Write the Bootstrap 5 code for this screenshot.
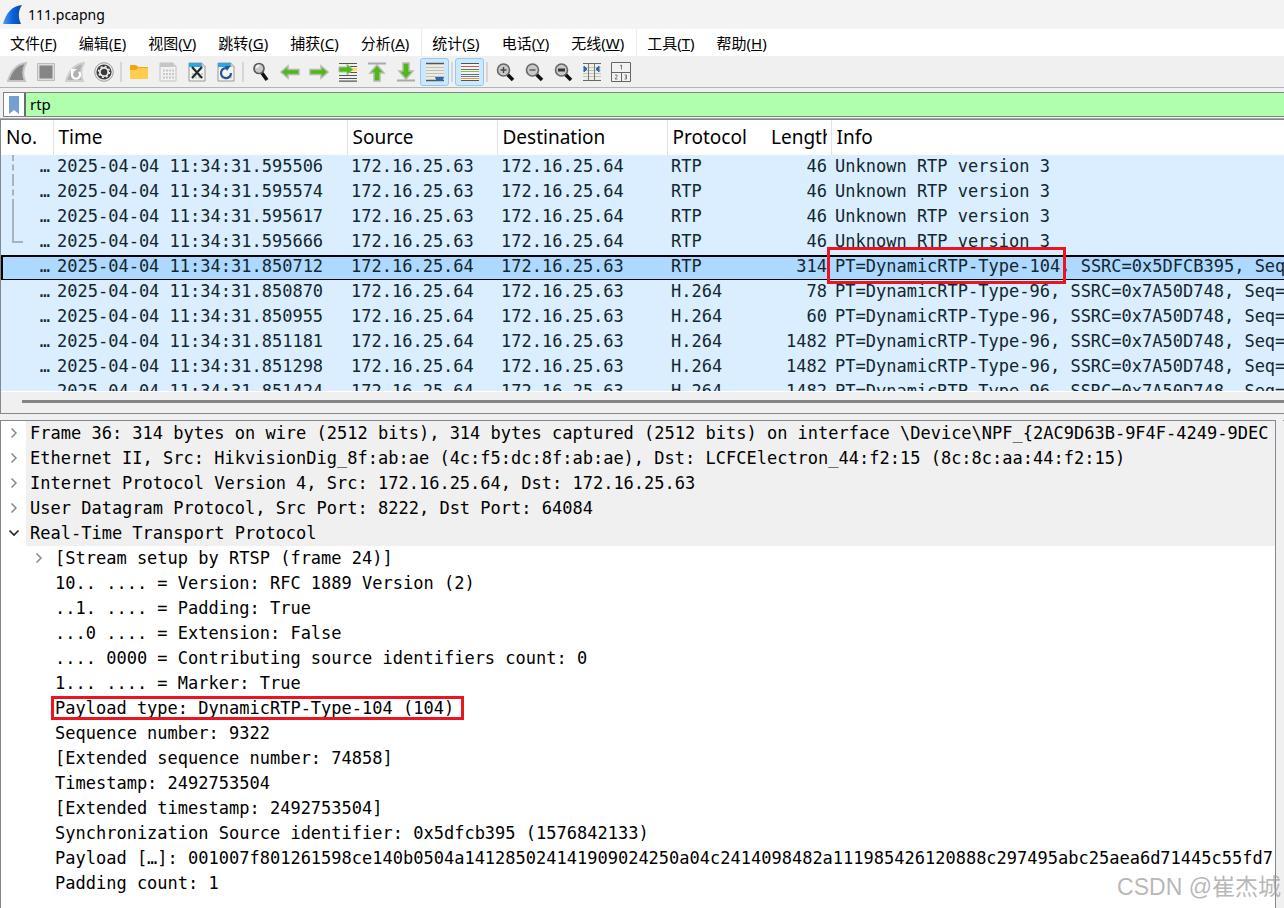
<!DOCTYPE html>
<html lang="zh-CN">
<head>
<meta charset="utf-8">
<meta name="viewport" content="width=device-width, initial-scale=1">
<title>111.pcapng</title>
<link href="https://cdn.jsdelivr.net/npm/bootstrap@5.3.0/dist/css/bootstrap.min.css" rel="stylesheet">
<style>
  body { background: #f0f0f0; color: #000; font-family: "Noto Sans", "Noto Sans CJK SC", sans-serif; font-size: 14px; }
  .mono { font-family: "DejaVu Sans Mono", monospace; font-size: 17px; }
  .titlebar { height: 29px; background: #f3f3f3; padding-left: 3px; gap: 5px; }
  .menubar { height: 27px; background: #fff; font-size: 15px; }
  .menubar button { border: 0; background: none; color: #000; padding: 0 12px 0 10px; white-space: nowrap; line-height: 26px; }
  .menubar .edge { border-left: 1px solid #ececec; }
  .tools { height: 32px; border-bottom: 1px solid #b4b4b4; padding: 2px 2px 1px; }
  .tools button { width: 29px; height: 28px; border: 1px solid transparent; border-radius: 3px; background: none; padding: 0; display: flex; align-items: center; justify-content: center; }
  .tools button.on { background: #cce8ff; border-color: #90c8f6; }
  .tools svg { width: 20px; height: 20px; }
  .divide { width: 2px; height: 20px; margin: 0 2px; background: #d6d6d6; }
  .filterbar { height: 25px; margin: 4px 0 1px 3px; border: 1px solid #828282; border-right: 0; background: #fff; }
  .filterbar button { width: 20px; border: 0; background: #fff; padding: 0; display: flex; align-items: center; justify-content: center; }
  .filterbar input { border: 0; border-left: 2px solid #6b6b6b; background: #afffaf; padding: 0 0 1px 4px; outline: 0; font-size: 15px; color: #000; }
  .panes { border-top: 1px solid #a8a8a8; gap: 6px; }
  .packets { flex: 293 1 0; border: 1px solid #828790; border-right: 0; }
  .lower { flex: 489 1 0; gap: 7px; }
  .packets table { table-layout: fixed; --bs-table-bg: #daeeff; --bs-table-color: #12272e; color: #12272e; }
  .packets th { --bs-table-bg: #fff; height: 35px; padding: 0 4px 0 5px; font-size: 19px; font-weight: 400; line-height: 35px; color: #000; border-right: 1px solid #e2e2e2; }
  .packets th.plain { border-right: 0; }
  .packets td { height: 25px; padding: 0 4px; line-height: 23px; white-space: nowrap; vertical-align: top; }
  .packets td:first-child { padding-right: 3px; }
  .packets .c-no { width: 52px; } .packets .c-time { width: 294px; } .packets .c-src { width: 150px; }
  .packets .c-dst { width: 170px; } .packets .c-proto { width: 99px; } .packets .c-len { width: 65px; }
  .packets tr.picked td { --bs-table-bg: #add8ff; background: #add8ff; box-shadow: inset 0 2px #000, inset 0 -1px #000; }
  .packets tr.picked td:first-child { box-shadow: inset 0 2px #000, inset 0 -1px #000, inset 2px 0 #000; }
  .link-mark { width: 11px; height: 25px; margin-left: 7px; border-left: 2px solid #a4b3bd; }
  .link-mark.dash { border-left-style: dashed; }
  .link-mark.end { height: 13px; border-bottom: 2px solid #a4b3bd; }
  .hscroll { height: 22px; padding-left: 21px; padding-bottom: 2px; background: #f0f0f0; border-top: 1px solid #fff; }
  .hscroll div { height: 3px; background: #858585; }
  .flag { position: relative; }
  .flag::after { content: ""; position: absolute; border: 3px solid #ed1420; inset: -9px -6px -8px -8px; }
  .flag.tight::after { inset: -2px -10px -2px -4px; }
  .details { border: 1px solid #828790; border-bottom: 0; background: #fff; }
  .details li { white-space: nowrap; line-height: 25px; }
  .node { display: flex; height: 25px; }
  .node button { width: 25px; flex: none; border: 0; background: none; padding: 0; display: flex; align-items: center; justify-content: center; }
  .node .lbl { flex: 1 0 auto; padding-left: 4px; }
  .layer > .node .lbl { background: #f0f0f0; }
  .sub { padding-left: 25px; }
  .sub .leaf { padding-left: 29px; }
  .bytes { flex: none; width: 1px; border-top: 1px solid #828790; background: #f0f0f0; }
  .credit { position: absolute; right: 3px; bottom: 4px; font-size: 23px; line-height: 34px; color: rgba(160,160,160,.75); font-family: "Liberation Sans", "Noto Sans CJK SC", sans-serif; }
</style>
</head>
<body class="vh-100 d-flex flex-column overflow-hidden">
<header>
  <div class="titlebar d-flex align-items-center">
    <svg width="20" height="20" viewBox="0 0 20 20"><defs><linearGradient id="fin" x1="0" x2="1"><stop offset="0" stop-color="#4f9cf0"/><stop offset=".5" stop-color="#0c62d8"/><stop offset="1" stop-color="#0746ac"/></linearGradient></defs><path d="M0 19C3 9 8 1 19 0C15 6 15 12 18 19Z" fill="url(#fin)"/></svg>
    <span>111.pcapng</span>
  </div>
  <nav class="menubar d-flex">
    <button type="button">文件(<u>F</u>)</button><button type="button">编辑(<u>E</u>)</button><button type="button">视图(<u>V</u>)</button><button type="button">跳转(<u>G</u>)</button><button type="button">捕获(<u>C</u>)</button><button type="button">分析(<u>A</u>)</button><button type="button" class="edge">统计(<u>S</u>)</button><button type="button">电话(<u>Y</u>)</button><button type="button">无线(<u>W</u>)</button><button type="button" class="edge">工具(<u>T</u>)</button><button type="button">帮助(<u>H</u>)</button>
  </nav>
  <div class="tools d-flex align-items-center" role="toolbar">
    <button type="button" aria-label="Start"><svg viewBox="0 0 20 20"><path d="M1 19C4 9 9 2 19 1C15.500 7 15.500 13 18 19Z" fill="#858585" stroke="#c4c4c4" stroke-width="2"/></svg></button>
    <button type="button" aria-label="Stop"><svg viewBox="0 0 20 20"><path d="M1.500 1.500h17v17h-17z" fill="#ddd" stroke="#bdbdbd"/><path d="M3.500 3.500h13v13h-13z" fill="#858585"/></svg></button>
    <button type="button" aria-label="Restart"><svg viewBox="0 0 20 20"><path d="M1 19C4 9 9 2 19 1C15.500 7 15.500 13 18 19Z" fill="#b0b0b0" stroke="#d0d0d0" stroke-width="2"/><path d="M8 10A4 4 0 1 0 14 10" fill="none" stroke="#fff" stroke-width="2.400"/><path d="M6 12V7h6z" fill="#fff"/></svg></button>
    <button type="button" aria-label="Options"><svg viewBox="0 0 20 20"><circle cx="10" cy="10" r="9.300" fill="#eee" stroke="#999"/><circle cx="10" cy="10" r="7.600" fill="#3b3b3b"/><circle cx="10" cy="10" r="4.200" fill="#3b3b3b" stroke="#eee" stroke-width="1.700"/><circle cx="10" cy="10" r="5.500" fill="none" stroke="#eee" stroke-width="1.400" stroke-dasharray="2 2.320"/></svg></button>
    <span class="divide"></span>
    <button type="button" aria-label="Open"><svg viewBox="0 0 20 20"><path d="M1 4q0-1 1-1h5l2 2h9q1 0 1 1v4H1z" fill="#eda914"/><path d="M1 8h6l2-2h9q1 0 1 1v9q0 1-1 1H2q-1 0-1-1z" fill="#ffce51"/></svg></button>
    <button type="button" aria-label="Save"><svg viewBox="0 0 20 20"><path d="M2 1h13l3 3v15H2z" fill="#f1f1f1" stroke="#c2c2c2"/><path d="M2 1h13v4H2z" fill="#c6c6c6"/><path d="M15 1v3h3" fill="#eee" stroke="#bbb"/><path d="M5 8.500h11M5 12h11M5 15.500h11" stroke="#c8c8c8" stroke-width="2" stroke-dasharray="2 1"/></svg></button>
    <button type="button" aria-label="Close"><svg viewBox="0 0 20 20"><path d="M2 1h13l3 3v15H2z" fill="#f5f5ef" stroke="#999"/><path d="M2 1h13v4H2z" fill="#2ea6df"/><path d="M15 1v3h3" fill="#eee" stroke="#aaa"/><path d="M5 12h11M5 15.500h11" stroke="#c8ccc8" stroke-width="2" stroke-dasharray="2 1"/><path d="M5 5l10 11M15 5L5 16" stroke="#25292d" stroke-width="2.200"/></svg></button>
    <button type="button" aria-label="Reload"><svg viewBox="0 0 20 20"><path d="M2 1h13l3 3v15H2z" fill="#f5f5ef" stroke="#999"/><path d="M2 1h13v4H2z" fill="#2ea6df"/><path d="M15 1v3h3" fill="#eee" stroke="#aaa"/><path d="M5 15.500h11" stroke="#c8ccc8" stroke-width="2" stroke-dasharray="2 1"/><path d="M12 6.500A5 5 0 1 0 15 11" fill="none" stroke="#24549f" stroke-width="2.200"/><path d="M9 4h5.500L11 9z" fill="#24549f"/></svg></button>
    <span class="divide"></span>
    <button type="button" aria-label="Find"><svg viewBox="0 0 20 20"><path d="M11 11l5 7" stroke="#111" stroke-width="3.500"/><circle cx="8" cy="6.500" r="5" fill="#c9c9c9" stroke="#5c5c5c" stroke-width="1.700"/><path d="M5.500 6a3 3 0 0 1 3-2.500" fill="none" stroke="#fff" stroke-width="1.300"/></svg></button>
    <button type="button" aria-label="Back"><svg viewBox="0 0 20 20"><path d="M1 10L8 4v3.500h11v5H8V16z" fill="#4fb813" stroke="#b3b9ae" stroke-width="1.500"/></svg></button>
    <button type="button" aria-label="Forward"><svg viewBox="0 0 20 20"><path d="M19 10L12 4v3.500H1v5h11V16z" fill="#4fb813" stroke="#b3b9ae" stroke-width="1.500"/></svg></button>
    <button type="button" aria-label="Go to packet"><svg viewBox="0 0 20 20"><path d="M1 1.500h18M1 13.500h18M1 16.500h18M1 19.200h18M12 4.500h7M12 10.500h7" stroke="#555" stroke-width="1.200"/><path d="M13 7.500h6" stroke="#ffe34a" stroke-width="3"/><path d="M15 7.500L9 2v3H1v5h8v3z" fill="#4fb813" stroke="#b3b9ae"/></svg></button>
    <button type="button" aria-label="First"><svg viewBox="0 0 20 20"><path d="M1 1.500h18" stroke="#aaa" stroke-width="2"/><path d="M10 3l7 8h-4v8H7v-8H3z" fill="#4fb813" stroke="#b3b9ae" stroke-width="1.500"/></svg></button>
    <button type="button" aria-label="Last"><svg viewBox="0 0 20 20"><path d="M1 18.500h18" stroke="#aaa" stroke-width="2"/><path d="M10 17l7-8h-4V1H7v8H3z" fill="#4fb813" stroke="#b3b9ae" stroke-width="1.500"/></svg></button>
    <button type="button" class="on" aria-label="Auto scroll"><svg viewBox="0 0 20 20"><path d="M1 2h18v16H1z" fill="#ecebe4"/><path d="M1 1.500h18M1 18.500h18" stroke="#555" stroke-width="1.500"/><path d="M1 5.500h18M1 8.500h18M1 11.500h18M1 14.500h18" stroke="#bfc0b6"/><path d="M10 15h9q-1 4-3 4h-3q-2 0-3-4z" fill="#2d66b3"/></svg></button>
    <span class="divide"></span>
    <button type="button" class="on" aria-label="Colorize"><svg viewBox="0 0 20 20"><path d="M1 1h18v18H1z" fill="#f6f4ee"/><path d="M1 1.500h18M1 18.500h18" stroke="#555"/><path d="M1 4.500h18" stroke="#e74c45"/><path d="M1 7.500h18" stroke="#4d76b8"/><path d="M1 9.500h18" stroke="#74d21c"/><path d="M1 12.500h18" stroke="#466fb0"/><path d="M1 14.500h18" stroke="#8668a0"/><path d="M1 16.500h18" stroke="#d5a91c"/></svg></button>
    <span class="divide"></span>
    <button type="button" aria-label="Zoom in"><svg viewBox="0 0 20 20"><path d="M12 12l6 6" stroke="#111" stroke-width="3.500"/><circle cx="8.500" cy="8" r="6" fill="#c9c9c9" stroke="#666" stroke-width="1.600"/><path d="M5.500 8h6M8.500 5v6" stroke="#444" stroke-width="1.400"/></svg></button>
    <button type="button" aria-label="Zoom out"><svg viewBox="0 0 20 20"><path d="M12 12l6 6" stroke="#111" stroke-width="3.500"/><circle cx="8.500" cy="8" r="6" fill="#c9c9c9" stroke="#666" stroke-width="1.600"/><path d="M5.500 8h6" stroke="#555" stroke-width="1.400"/></svg></button>
    <button type="button" aria-label="Normal size"><svg viewBox="0 0 20 20"><path d="M12 12l6 6" stroke="#111" stroke-width="3.500"/><circle cx="8.500" cy="8" r="6" fill="#c9c9c9" stroke="#666" stroke-width="1.600"/><path d="M5 8h7" stroke="#333" stroke-width="3"/></svg></button>
    <button type="button" aria-label="Resize columns"><svg viewBox="0 0 20 20"><path d="M1 1h18v18H1z" fill="#eeeee6"/><path d="M1 5.500h18M1 8.500h18M1 11.500h18M1 14.500h18" stroke="#c4c6bb"/><path d="M1 1.500h18M1 18.500h18" stroke="#666"/><path d="M6.500 1v18M12.500 1v18" stroke="#777"/><path d="M2 4l3 3-3 3zM17 4l-3 3 3 3z" fill="#2d66b3" stroke="#2d66b3"/></svg></button>
    <button type="button" aria-label="Layout"><svg viewBox="0 0 20 20"><path d="M.500.500h19v19H.500zM.500 10.500h19M10.500 10v9" fill="#f2f2f2" stroke="#666"/><path d="M9 4l1.500-1v4.500M4 13h2v1.500L4 17h2.500M13.500 13h2v4h-2M14 15h1.500" fill="none" stroke="#777"/></svg></button>
  </div>
  <div class="filterbar d-flex">
    <button type="button" aria-label="Bookmark"><svg width="12" height="18" viewBox="0 0 12 18"><path d="M1 0h10v18l-5-4-5 4z" fill="#739fd2"/></svg></button>
    <input type="text" class="flex-fill" value="rtp" aria-label="Display filter">
  </div>
</header>
<main class="panes flex-fill d-flex flex-column overflow-hidden">
  <section class="packets d-flex flex-column overflow-hidden">
    <div class="flex-fill overflow-hidden">
      <table class="table table-borderless mb-0">
        <colgroup><col class="c-no"><col class="c-time"><col class="c-src"><col class="c-dst"><col class="c-proto"><col class="c-len"><col></colgroup>
        <thead><tr><th>No.</th><th>Time</th><th>Source</th><th>Destination</th><th class="plain">Protocol</th><th><div class="overflow-hidden">Length</div></th><th class="plain">Info</th></tr></thead>
        <tbody class="mono">
          <tr><td><div class="d-flex justify-content-between"><span class="link-mark dash"></span>…</div></td><td>2025-04-04 11:34:31.595506</td><td>172.16.25.63</td><td>172.16.25.64</td><td>RTP</td><td class="text-end">46</td><td>Unknown RTP version 3</td></tr>
          <tr><td><div class="d-flex justify-content-between"><span class="link-mark dash"></span>…</div></td><td>2025-04-04 11:34:31.595574</td><td>172.16.25.63</td><td>172.16.25.64</td><td>RTP</td><td class="text-end">46</td><td>Unknown RTP version 3</td></tr>
          <tr><td><div class="d-flex justify-content-between"><span class="link-mark"></span>…</div></td><td>2025-04-04 11:34:31.595617</td><td>172.16.25.63</td><td>172.16.25.64</td><td>RTP</td><td class="text-end">46</td><td>Unknown RTP version 3</td></tr>
          <tr><td><div class="d-flex justify-content-between"><span class="link-mark end"></span>…</div></td><td>2025-04-04 11:34:31.595666</td><td>172.16.25.63</td><td>172.16.25.64</td><td>RTP</td><td class="text-end">46</td><td>Unknown RTP version 3</td></tr>
          <tr class="picked"><td class="text-end">…</td><td>2025-04-04 11:34:31.850712</td><td>172.16.25.64</td><td>172.16.25.63</td><td>RTP</td><td class="text-end">314</td><td><span class="flag">PT=DynamicRTP-Type-104</span>, SSRC=0x5DFCB395, Seq</td></tr>
          <tr><td class="text-end">…</td><td>2025-04-04 11:34:31.850870</td><td>172.16.25.64</td><td>172.16.25.63</td><td>H.264</td><td class="text-end">78</td><td>PT=DynamicRTP-Type-96, SSRC=0x7A50D748, Seq=</td></tr>
          <tr><td class="text-end">…</td><td>2025-04-04 11:34:31.850955</td><td>172.16.25.64</td><td>172.16.25.63</td><td>H.264</td><td class="text-end">60</td><td>PT=DynamicRTP-Type-96, SSRC=0x7A50D748, Seq=</td></tr>
          <tr><td class="text-end">…</td><td>2025-04-04 11:34:31.851181</td><td>172.16.25.64</td><td>172.16.25.63</td><td>H.264</td><td class="text-end">1482</td><td>PT=DynamicRTP-Type-96, SSRC=0x7A50D748, Seq=</td></tr>
          <tr><td class="text-end">…</td><td>2025-04-04 11:34:31.851298</td><td>172.16.25.64</td><td>172.16.25.63</td><td>H.264</td><td class="text-end">1482</td><td>PT=DynamicRTP-Type-96, SSRC=0x7A50D748, Seq=</td></tr>
          <tr><td class="text-end">…</td><td>2025-04-04 11:34:31.851424</td><td>172.16.25.64</td><td>172.16.25.63</td><td>H.264</td><td class="text-end">1482</td><td>PT=DynamicRTP-Type-96, SSRC=0x7A50D748, Seq=</td></tr>
        </tbody>
      </table>
    </div>
    <div class="hscroll d-flex align-items-center flex-shrink-0"><div class="flex-fill"></div></div>
  </section>
  <div class="lower d-flex overflow-hidden">
    <section class="details mono flex-fill overflow-hidden">
      <ul class="list-unstyled mb-0">
        <li class="layer"><div class="node"><button type="button" aria-label="Expand"><svg width="8" height="12" viewBox="0 0 8 12"><path d="M1.500 1.500L6 6l-4.500 4.500" fill="none" stroke="#8a8a8a" stroke-width="1.500"/></svg></button><span class="lbl">Frame 36: 314 bytes on wire (2512 bits), 314 bytes captured (2512 bits) on interface \Device\NPF_{2AC9D63B-9F4F-4249-9DEC</span></div></li>
        <li class="layer"><div class="node"><button type="button" aria-label="Expand"><svg width="8" height="12" viewBox="0 0 8 12"><path d="M1.500 1.500L6 6l-4.500 4.500" fill="none" stroke="#8a8a8a" stroke-width="1.500"/></svg></button><span class="lbl">Ethernet II, Src: HikvisionDig_8f:ab:ae (4c:f5:dc:8f:ab:ae), Dst: LCFCElectron_44:f2:15 (8c:8c:aa:44:f2:15)</span></div></li>
        <li class="layer"><div class="node"><button type="button" aria-label="Expand"><svg width="8" height="12" viewBox="0 0 8 12"><path d="M1.500 1.500L6 6l-4.500 4.500" fill="none" stroke="#8a8a8a" stroke-width="1.500"/></svg></button><span class="lbl">Internet Protocol Version 4, Src: 172.16.25.64, Dst: 172.16.25.63</span></div></li>
        <li class="layer"><div class="node"><button type="button" aria-label="Expand"><svg width="8" height="12" viewBox="0 0 8 12"><path d="M1.500 1.500L6 6l-4.500 4.500" fill="none" stroke="#8a8a8a" stroke-width="1.500"/></svg></button><span class="lbl">User Datagram Protocol, Src Port: 8222, Dst Port: 64084</span></div></li>
        <li class="layer"><div class="node"><button type="button" aria-label="Collapse"><svg width="12" height="8" viewBox="0 0 12 8"><path d="M1.500 1.500L6 6l4.500-4.500" fill="none" stroke="#222" stroke-width="1.600"/></svg></button><span class="lbl">Real-Time Transport Protocol</span></div>
          <ul class="list-unstyled sub">
            <li><div class="node"><button type="button" aria-label="Expand"><svg width="8" height="12" viewBox="0 0 8 12"><path d="M1.500 1.500L6 6l-4.500 4.500" fill="none" stroke="#8a8a8a" stroke-width="1.500"/></svg></button><span class="lbl">[Stream setup by RTSP (frame 24)]</span></div></li>
            <li class="leaf">10.. .... = Version: RFC 1889 Version (2)</li>
            <li class="leaf">..1. .... = Padding: True</li>
            <li class="leaf">...0 .... = Extension: False</li>
            <li class="leaf">.... 0000 = Contributing source identifiers count: 0</li>
            <li class="leaf">1... .... = Marker: True</li>
            <li class="leaf"><span class="flag tight">Payload type: DynamicRTP-Type-104 (104)</span></li>
            <li class="leaf">Sequence number: 9322</li>
            <li class="leaf">[Extended sequence number: 74858]</li>
            <li class="leaf">Timestamp: 2492753504</li>
            <li class="leaf">[Extended timestamp: 2492753504]</li>
            <li class="leaf">Synchronization Source identifier: 0x5dfcb395 (1576842133)</li>
            <li class="leaf">Payload […]: 001007f801261598ce140b0504a141285024141909024250a04c2414098482a111985426120888c297495abc25aea6d71445c55fd7</li>
            <li class="leaf">Padding count: 1</li>
          </ul>
        </li>
      </ul>
    </section>
    <div class="bytes"></div>
  </div>
</main>
<div class="credit">CSDN @崔杰城</div>
<script src="https://cdn.jsdelivr.net/npm/bootstrap@5.3.0/dist/js/bootstrap.bundle.min.js"></script>
</body>
</html>
